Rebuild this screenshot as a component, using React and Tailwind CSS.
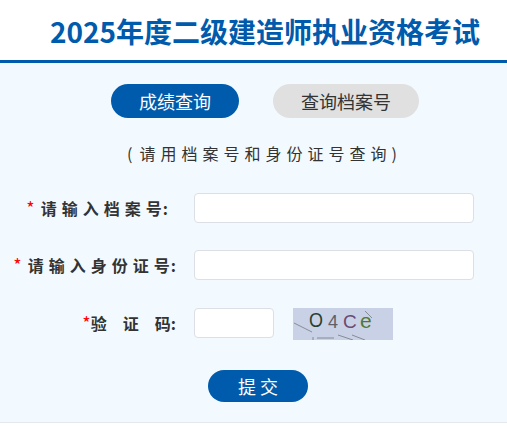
const CJK = "font-['Noto_Sans_CJK_SC','Noto_Sans',sans-serif]";

function Label({ w, children }) {
  return (
    <label className={`${w} shrink-0 text-right text-[16px] font-bold leading-[30px] text-[#333] whitespace-nowrap`}>
      {children}
    </label>
  );
}

function Star({ gap }) {
  return <span className={`text-[#f00] font-normal text-[18px] leading-[18px] ${gap}`}>*</span>;
}

function Captcha() {
  return (
    <svg width="100" height="32" viewBox="0 0 100 32" className="block">
      <rect width="100" height="32" fill="#c9d1e6" />
      <g stroke="#777a80" strokeWidth="0.8" fill="none">
        <path d="M1 15 L19 24" />
        <path d="M20 29 L20 32" />
        <path d="M24 30 L41 30" />
        <path d="M45 27 L60 32" />
        <path d="M59 27 L72 32" />
        <path d="M72 3 L79 10" />
      </g>
      <g>
        <text x="16" y="19" fontSize="21" textLength="14" lengthAdjust="spacingAndGlyphs" fontFamily="'Liberation Sans',sans-serif" fill="#27402f">O</text>
        <text x="35" y="20" fontSize="18" fontFamily="'Liberation Sans',sans-serif" fill="#5d6068">4</text>
        <text x="50" y="20" fontSize="19" fontFamily="'Liberation Sans',sans-serif" fill="#6a4c6c">C</text>
        <text x="67" y="20" fontSize="21" fontFamily="'Liberation Sans',sans-serif" fill="#4f7a35">e</text>
      </g>
    </svg>
  );
}

export default function App() {
  return (
    <div className={`w-[507px] h-[443px] bg-white overflow-hidden ${CJK}`}>
      <header className="h-[63px] border-b-[3px] border-[#005bac] pl-[50px] pt-[10px]">
        <h1 className="text-[28px] font-bold leading-[42px] text-[#005bac] whitespace-nowrap">
          2025年度二级建造师执业资格考试
        </h1>
      </header>
      <main className="h-[360px] bg-[#f2faff] border-b border-[#e6e9ec] flex flex-col">
        <div className="flex pt-[21px] pl-[111px] gap-[34px]">
          <button className="w-[128px] h-[34px] rounded-[17px] bg-[#005bac] text-white text-[18px] leading-[34px]">
            成绩查询
          </button>
          <button className="w-[146px] h-[34px] rounded-[17px] bg-[#e0e0e0] text-[#333] text-[18px] leading-[34px]">
            查询档案号
          </button>
        </div>
        <p className="mt-[23px] h-[24px] pl-[127px] text-[16px] leading-[24px] tracking-[5px] text-[#333] whitespace-nowrap">
          (<span className="ml-[2px]">请用档案号和身份证号查询</span>)
        </p>
        <div className="mt-[28px] flex items-center h-[30px]">
          <Label w="w-[173px]"><Star gap="mr-[6px]" /><span className="tracking-[5px]">请输入档案</span><span className="tracking-[1px]">号</span><span className="tracking-[5px]">:</span></Label>
          <input className="ml-[21px] w-[280px] h-[30px] bg-white border border-[#dcdfe6] rounded-[4px]" />
        </div>
        <div className="mt-[27px] flex items-center h-[30px]">
          <Label w="w-[181px]"><Star gap="mr-[6px]" /><span className="tracking-[5px]">请输入身份证</span><span className="tracking-[1px]">号</span><span className="tracking-[5px]">:</span></Label>
          <input className="ml-[13px] w-[280px] h-[30px] bg-white border border-[#dcdfe6] rounded-[4px]" />
        </div>
        <div className="mt-[28px] flex items-start h-[32px]">
          <Label w="w-[176px]"><Star gap="" /><span>验</span><span className="ml-[16px]">证</span><span className="ml-[16px]">码:</span></Label>
          <input className="ml-[18px] w-[80px] h-[30px] bg-white border border-[#dcdfe6] rounded-[4px]" />
          <div className="ml-[19px]"><Captcha /></div>
        </div>
        <button className="mt-[30px] ml-[208px] w-[100px] h-[32px] rounded-[16px] bg-[#005bac] text-white text-[18px] leading-[32px] tracking-[4px] pl-[4px]">
          提交
        </button>
      </main>
    </div>
  );
}
